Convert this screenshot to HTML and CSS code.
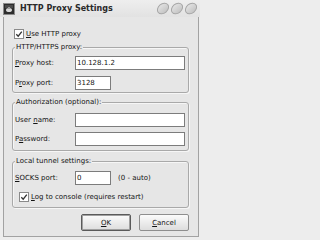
FILE: index.html
```html
<!DOCTYPE html>
<html>
<head>
<meta charset="utf-8">
<link rel="stylesheet" href="styles.css">
</head>
<body>
<div class="window">
  <div class="titlebar">
    <svg class="app-icon" viewBox="0 0 12 12">
      <rect x="0.5" y="0.5" width="11" height="11" fill="#2c2c2c" stroke="#8a8a8a"/>
      <rect x="2" y="2" width="8" height="3" fill="#4a4a4a"/>
      <ellipse cx="6" cy="7" rx="3" ry="2" fill="#d6d6d6"/>
      <rect x="5" y="4" width="2" height="2" fill="#9a9a9a"/>
    </svg>
    <span class="title">HTTP Proxy Settings</span>
    <svg class="winbtns" viewBox="0 0 42 13">
      <defs>
        <linearGradient id="gb" x1="0" y1="0" x2="0" y2="1">
          <stop offset="0" stop-color="#e2e2e2"/>
          <stop offset="1" stop-color="#c4c4c4"/>
        </linearGradient>
      </defs>
      <ellipse cx="7" cy="6.5" rx="6.2" ry="4.6" transform="rotate(-40 7 6.5)" fill="url(#gb)" stroke="#a6a6a6"/>
      <ellipse cx="21" cy="6.5" rx="6.2" ry="4.6" transform="rotate(-40 21 6.5)" fill="url(#gb)" stroke="#a6a6a6"/>
      <ellipse cx="35" cy="6.5" rx="6.2" ry="4.6" transform="rotate(-40 35 6.5)" fill="url(#gb)" stroke="#a6a6a6"/>
    </svg>
  </div>
  <div class="client">
    <div class="check top-check">
      <span class="box"><svg viewBox="0 0 8 8"><path d="M1.3 4.2 L3.2 6.2 L6.8 1.6" fill="none" stroke="#333" stroke-width="1.3"/></svg></span>
      <span><u>U</u>se HTTP proxy</span>
    </div>

    <div class="group g1">
      <div class="legend">HTTP/HTTPS proxy:</div>
      <div class="grid">
        <span class="lbl"><u>P</u>roxy host:</span>
        <div class="field">10.128.1.2</div>
        <span class="lbl">P<u>r</u>oxy port:</span>
        <div class="field short">3128</div>
      </div>
    </div>

    <div class="group g2">
      <div class="legend">Authorization (optional):</div>
      <div class="grid tight">
        <span class="lbl">User <u>n</u>ame:</span>
        <div class="field"></div>
        <span class="lbl">P<u>a</u>ssword:</span>
        <div class="field"></div>
      </div>
    </div>

    <div class="group g3">
      <div class="legend">Local tunnel settings:</div>
      <div class="grid">
        <span class="lbl"><u>S</u>OCKS port:</span>
        <div class="inline">
          <div class="field short">0</div>
          <span class="hint">(0 - auto)</span>
        </div>
      </div>
      <div class="check inner-check">
        <span class="box"><svg viewBox="0 0 8 8"><path d="M1.3 4.2 L3.2 6.2 L6.8 1.6" fill="none" stroke="#333" stroke-width="1.3"/></svg></span>
        <span><u>L</u>og to console (requires restart)</span>
      </div>
    </div>

    <div class="buttons">
      <div class="btn default"><span><u>O</u>K</span></div>
      <div class="btn"><span><u>C</u>ancel</span></div>
    </div>
  </div>
</div>
</body>
</html>
```

FILE: styles.css
```css
* { box-sizing: border-box; }

body {
  margin: 0;
  width: 200px;
  height: 240px;
  overflow: hidden;
  background: #ededed;
  font-family: "DejaVu Sans", sans-serif;
  font-size: 7px;
  color: #141414;
}

.window {
  height: 240px;
  display: flex;
  flex-direction: column;
}

.titlebar {
  height: 17px;
  flex: none;
  display: flex;
  align-items: center;
  padding-left: 3px;
  background: linear-gradient(#eeeeee, #e2e2e2);
}

.app-icon {
  width: 12px;
  height: 12px;
  flex: none;
}

.title {
  flex: 1;
  margin-left: 5px;
  font-size: 8px;
  font-weight: bold;
  color: #2a2a2a;
  white-space: nowrap;
}

.winbtns {
  width: 42px;
  height: 13px;
  margin-right: 2px;
  flex: none;
}

.client {
  flex: 1;
  margin: 0 1px 3px 3px;
  border: 1px solid #a2a2a2;
  border-top: none;
  background: #e6e6e6;
  display: flex;
  flex-direction: column;
}

.check {
  display: flex;
  align-items: center;
  height: 10px;
  white-space: nowrap;
}

.top-check {
  margin: 11px 0 0 10px;
  height: 11px;
}

.box {
  width: 10px;
  height: 10px;
  flex: none;
  margin-right: 2px;
  border: 1px solid #8a8a8a;
  background: #fff;
  display: flex;
}

.box svg {
  width: 8px;
  height: 8px;
}

.group {
  margin: 0 9px 0 8px;
  padding: 0 3px 2px 2px;
  border: 1px solid #a9a9a9;
  border-radius: 3px;
  box-shadow: 1px 1px 0 #f6f6f6, inset 1px 1px 0 #f6f6f6;
  display: flex;
  flex-direction: column;
}

.g1 { margin-top: 8px; padding-bottom: 2px; }
.g2 { margin-top: 9px; padding-bottom: 4px; }
.g3 { margin-top: 10px; padding-bottom: 5px; }

.legend {
  align-self: flex-start;
  height: 10px;
  line-height: 10px;
  margin: -6px 0 4px 0;
  padding: 0 1px;
  background: #e6e6e6;
  white-space: nowrap;
}

.g2 .legend { margin-bottom: 6px; }
.g3 .legend { margin-bottom: 5px; }

.grid {
  display: grid;
  grid-template-columns: 60px 110px;
  row-gap: 6px;
  align-items: center;
}

.grid.tight { row-gap: 5px; }

.lbl { white-space: nowrap; }

.field {
  height: 14px;
  line-height: 12px;
  padding-left: 1px;
  border: 1px solid #7c7c7c;
  background: #fff;
  white-space: nowrap;
}

.short { width: 36px; }

.inline {
  display: flex;
  align-items: center;
}

.hint {
  margin-left: 7px;
  white-space: nowrap;
}

.inner-check {
  margin: 7px 0 0 4px;
}

.buttons {
  display: flex;
  justify-content: flex-end;
  gap: 8px;
  margin: 6px 9px 0 0;
}

.btn {
  width: 50px;
  height: 17px;
  border: 1px solid #8e8e8e;
  border-radius: 2px;
  background: linear-gradient(#fbfbfb, #dddddd);
  display: flex;
  align-items: center;
  justify-content: center;
}

.btn.default {
  border-color: #5a5a5a;
  box-shadow: inset 0 0 0 1px #a0a0a0;
}
```
